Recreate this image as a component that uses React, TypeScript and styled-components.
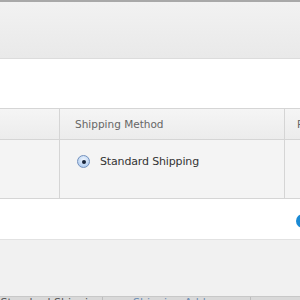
import React from "react";
import styled, { createGlobalStyle } from "styled-components";

const Global = createGlobalStyle`
  html, body { margin: 0; padding: 0; background: #fff; }
  body { width: 300px; height: 300px; overflow: hidden; font-family: "DejaVu Sans", "Liberation Sans", sans-serif; }
`;

const Page = styled.div`
  width: 300px;
  height: 300px;
  overflow: hidden;
  display: flex;
  flex-direction: column;
`;

const TopBar = styled.div`
  height: 56px;
  flex: none;
  border-top: 2px solid #a9a9a9;
  border-bottom: 1px solid #dcdcdc;
  background: linear-gradient(#f2f2f2, #e9e9e9);
`;

const Gap = styled.div<{ $h: number }>`
  height: ${(p) => p.$h}px;
  flex: none;
  background: #fff;
  position: relative;
`;

const Row = styled.div<{ $head?: boolean }>`
  display: grid;
  grid-template-columns: 59px 225px 1fr;
  flex: none;
  height: ${(p) => (p.$head ? 30 : 58)}px;
  border-top: ${(p) => (p.$head ? "1px solid #d5d5d5" : "none")};
  border-bottom: 1px solid #d5d5d5;
  background: ${(p) => (p.$head ? "linear-gradient(#f5f5f5, #ececec)" : "#f4f4f4")};
`;

const Cell = styled.div<{ $head?: boolean; $pad?: number }>`
  border-left: 1px solid #d5d5d5;
  padding-left: ${(p) => p.$pad ?? 15}px;
  display: flex;
  align-items: ${(p) => (p.$head ? "center" : "flex-start")};
  padding-top: ${(p) => (p.$head ? 0 : 15)}px;
  font-size: ${(p) => (p.$head ? 10.5 : 11)}px;
  letter-spacing: ${(p) => (p.$head ? 0 : -0.15)}px;
  color: ${(p) => (p.$head ? "#666" : "#333")};
  white-space: nowrap;
  overflow: hidden;
  &:first-child { border-left: none; }
`;

const Radio = styled.span`
  width: 13px;
  height: 13px;
  flex: none;
  border-radius: 50%;
  box-sizing: border-box;
  border: 1px solid #7391bd;
  background: radial-gradient(circle at 50% 35%, #f0f6fe, #9fc1ec);
  display: inline-flex;
  align-items: center;
  justify-content: center;
  margin-right: 10px;
  margin-left: 2px;
  &::after {
    content: "";
    width: 4px;
    height: 4px;
    border-radius: 50%;
    background: #17243a;
  }
`;

const Label = styled.span`
  line-height: 13px;
`;

const BlueDot = styled.span`
  position: absolute;
  right: -10px;
  top: 15px;
  width: 14px;
  height: 14px;
  border-radius: 50%;
  background: #1a8ad4;
`;

const Footer = styled.div`
  flex: 1;
  border-top: 1px solid #e2e2e2;
  background: #f1f1f1;
  display: flex;
  flex-direction: column;
  justify-content: flex-end;
`;

const FooterRow = styled.div`
  height: 3px;
  background: #d9d9d9;
  border-top: 1px solid #c8c8c8;
  display: grid;
  grid-template-columns: 102px 148px 1fr;
  overflow: hidden;
  font-size: 11px;
  line-height: 12px;
`;

const FooterCell = styled.div<{ $blue?: boolean }>`
  border-left: 1px solid #bdbdbd;
  color: ${(p) => (p.$blue ? "#6b8db5" : "#555")};
  padding-left: ${(p) => (p.$blue ? 30 : 0)}px;
  white-space: nowrap;
  overflow: hidden;
  &:first-child { border-left: none; text-align: right; }
`;

export default function App() {
  return (
    <Page>
      <Global />
      <TopBar />
      <Gap $h={49} />
      <Row $head>
        <Cell $head />
        <Cell $head>Shipping Method</Cell>
        <Cell $head $pad={12}>Price</Cell>
      </Row>
      <Row>
        <Cell />
        <Cell>
          <Radio />
          <Label>Standard Shipping</Label>
        </Cell>
        <Cell $pad={12} />
      </Row>
      <Gap $h={40}>
        <BlueDot />
      </Gap>
      <Footer>
        <FooterRow>
          <FooterCell>Standard Shipping</FooterCell>
          <FooterCell $blue>Shipping Address</FooterCell>
          <FooterCell />
        </FooterRow>
      </Footer>
    </Page>
  );
}
